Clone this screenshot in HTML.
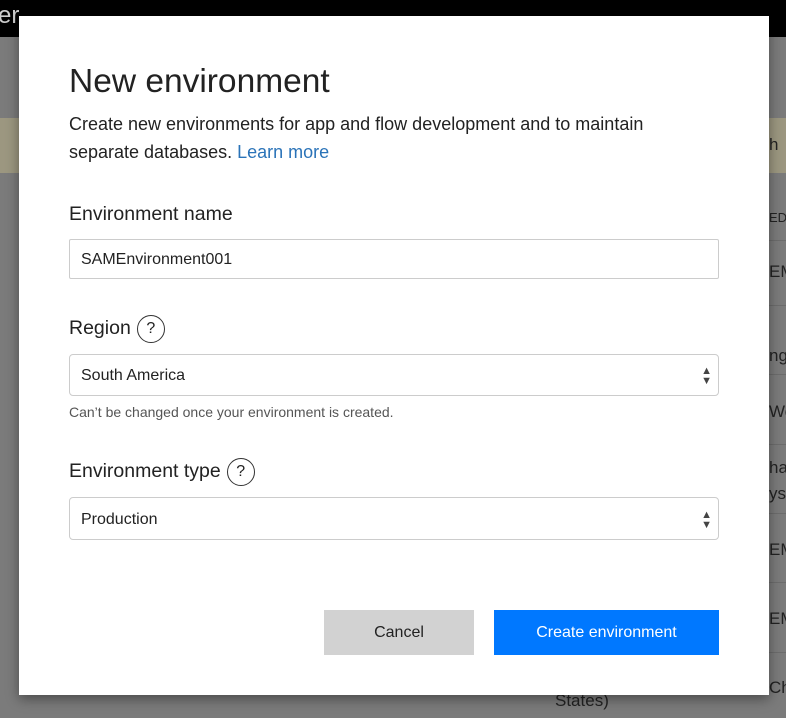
<!DOCTYPE html>
<html><head><style>
body{margin:0;width:786px;height:718px;position:relative;overflow:hidden;background:#7b7b7b;font-family:"Liberation Sans",sans-serif;}
.top{position:absolute;left:0;top:0;width:786px;height:37px;background:#000;color:#ccc;font-size:24px;}
.band{position:absolute;left:0;top:118px;width:786px;height:55px;background:#9c9780;}
.r{position:absolute;left:769px;color:#222;font-size:17px;}
.line{position:absolute;left:769px;width:17px;height:1px;background:#6c6c6c;}
.dlg{position:absolute;left:19px;top:16px;width:750px;height:679px;background:#fff;box-shadow:0 4px 12px rgba(0,0,0,.4);}
.dlg *{position:absolute;margin:0;}
h1{left:50px;top:47px;font-size:33.5px;font-weight:normal;color:#222;}
.desc{left:50px;top:94px;font-size:18px;line-height:28px;color:#222;width:640px;}
.desc span{position:static;color:#2a73b8;}
.lbl{left:50px;font-size:19.5px;color:#222;}
.q{position:static;display:inline-block;width:26px;height:26px;border:1px solid #333;border-radius:50%;font-size:16px;text-align:center;line-height:26px;vertical-align:middle;margin-left:6px;}
.inp{left:50px;width:650px;height:40px;border:1px solid #ccc;border-radius:2px;font-size:16px;color:#222;line-height:40px;padding-left:11px;box-sizing:border-box;}
.inp.sel{border-radius:4px;}
.arr{right:6px;top:11px;font-size:11px;line-height:10px;color:#444;}
.hint{left:50px;top:388px;font-size:14px;color:#555;}
.btn{top:594px;height:45px;line-height:45px;text-align:center;font-size:16px;}
</style></head><body>
<div class="top"><span style="position:absolute;left:-2px;top:2px">er</span></div>
<div class="band"></div>
<div class="r" style="top:135px">h</div>
<div class="r" style="top:210px;font-size:13px">ED</div>
<div class="r" style="top:262px">EM</div>
<div class="r" style="top:346px">ng</div>
<div class="r" style="top:402px">We</div>
<div class="r" style="top:458px">ha</div>
<div class="r" style="top:484px">ys</div>
<div class="r" style="top:540px">EM</div>
<div class="r" style="top:609px">EM</div>
<div class="r" style="top:678px">Ch</div>
<div class="line" style="top:240px"></div><div class="line" style="top:305px"></div><div class="line" style="top:374px"></div><div class="line" style="top:444px"></div><div class="line" style="top:513px"></div><div class="line" style="top:582px"></div><div class="line" style="top:652px"></div>
<div style="position:absolute;left:555px;top:691px;font-size:17px;color:#222">States)</div>
<div class="dlg">
<h1>New environment</h1>
<p class="desc">Create new environments for app and flow development and to maintain separate databases. <span>Learn more</span></p>
<div class="lbl" style="top:187px">Environment name</div>
<div class="inp" style="top:223px">SAMEnvironment001</div>
<div class="lbl" style="top:299px">Region<span class="q">?</span></div>
<div class="inp sel" style="top:338px;height:42px;line-height:42px">South America<div class="arr">▲<br>▼</div></div>
<div class="hint">Can’t be changed once your environment is created.</div>
<div class="lbl" style="top:442px">Environment type<span class="q">?</span></div>
<div class="inp sel" style="top:481px;height:43px;line-height:43px">Production<div class="arr" style="top:12px">▲<br>▼</div></div>
<div class="btn" style="left:305px;width:150px;background:#d2d2d2;color:#222">Cancel</div>
<div class="btn" style="left:475px;width:225px;background:#0078ff;color:#fff">Create environment</div>
</div>
</body></html>
